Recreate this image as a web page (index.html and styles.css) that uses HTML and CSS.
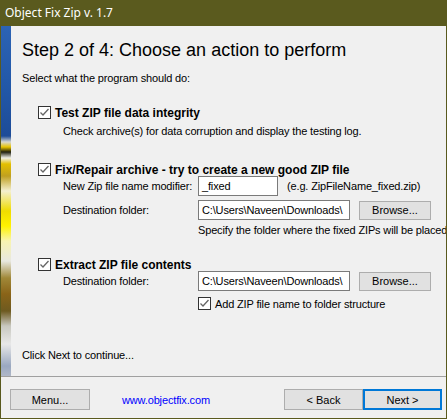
FILE: index.html
```html
<!DOCTYPE html>
<html lang="en">
  <head>
    <meta charset="UTF-8" />
    <meta name="viewport" content="width=device-width, initial-scale=1.0" />
    <title>Object Fix Zip v. 1.7</title>
    <link rel="stylesheet" href="styles.css">
  </head>
  <body>
    <div class="window">
      <div class="titlebar">Object Fix Zip v. 1.7</div>

      <div class="main">
        <div class="banner"></div>
        <div class="content">
          <h1>Step 2 of 4: Choose an action to perform</h1>
          <p class="intro">Select what the program should do:</p>

          <div class="option opt-test">
            <label class="check-row">
              <span class="box"><svg width="13" height="13" viewBox="0 0 13 13"><rect x="0.5" y="0.5" width="12" height="12" fill="#fff" stroke="#333"/><polyline points="2.5,6.5 5,9 10.5,3" fill="none" stroke="#666" stroke-width="1.3"/></svg></span>
              <span class="title">Test ZIP file data integrity</span>
            </label>
            <div class="desc">Check archive(s) for data corruption and display the testing log.</div>
          </div>

          <div class="option opt-fix">
            <label class="check-row">
              <span class="box"><svg width="13" height="13" viewBox="0 0 13 13"><rect x="0.5" y="0.5" width="12" height="12" fill="#fff" stroke="#333"/><polyline points="2.5,6.5 5,9 10.5,3" fill="none" stroke="#666" stroke-width="1.3"/></svg></span>
              <span class="title clipped">Fix/Repair archive - try to create a new good ZIP file</span>
            </label>
            <div class="field field-first">
              <span class="field-label">New Zip file name modifier:</span>
              <span class="input short">_fixed</span>
              <span class="hint">(e.g. ZipFileName_fixed.zip)</span>
            </div>
            <div class="field">
              <span class="field-label">Destination folder:</span>
              <span class="input long">C:\Users\Naveen\Downloads\</span>
              <button class="btn browse">Browse...</button>
            </div>
            <div class="note">Specify the folder where the fixed ZIPs will be placed</div>
          </div>

          <div class="option opt-extract">
            <label class="check-row">
              <span class="box"><svg width="13" height="13" viewBox="0 0 13 13"><rect x="0.5" y="0.5" width="12" height="12" fill="#fff" stroke="#333"/><polyline points="2.5,6.5 5,9 10.5,3" fill="none" stroke="#666" stroke-width="1.3"/></svg></span>
              <span class="title">Extract ZIP file contents</span>
            </label>
            <div class="field field-first">
              <span class="field-label">Destination folder:</span>
              <span class="input long">C:\Users\Naveen\Downloads\</span>
              <button class="btn browse">Browse...</button>
            </div>
            <label class="check-row sub-check">
              <span class="box"><svg width="13" height="13" viewBox="0 0 13 13"><rect x="0.5" y="0.5" width="12" height="12" fill="#fff" stroke="#333"/><polyline points="2.5,6.5 5,9 10.5,3" fill="none" stroke="#666" stroke-width="1.3"/></svg></span>
              <span class="small-label">Add ZIP file name to folder structure</span>
            </label>
          </div>

          <p class="next-hint">Click Next to continue...</p>
        </div>
      </div>

      <div class="footer">
        <button class="btn">Menu...</button>
        <a class="site" href="#">www.objectfix.com</a>
        <div class="nav">
          <button class="btn">&lt; Back</button>
          <button class="btn default">Next &gt;</button>
        </div>
      </div>
    </div>
  </body>
</html>
```

FILE: styles.css
```css
body {
  margin: 0;
  padding: 0;
  background-color: #f0f0f0;
  font-family: "Liberation Sans", Arial, sans-serif;
  font-size: 11px;
  letter-spacing: -0.15px;
  color: #000;
}
.window {
  width: 447px;
  height: 419px;
  box-sizing: border-box;
  border: 1px solid #5a5a1e;
  border-top: none;
  background-color: #f0f0f0;
  overflow: hidden;
}
.titlebar {
  height: 26px;
  margin: 0 -1px;
  padding-left: 5px;
  background-color: #5a5a1e;
  color: #fff;
  font-family: "Noto Sans", "Open Sans", sans-serif;
  font-size: 12px;
  letter-spacing: 0;
  line-height: 26px;
}
.main {
  display: flex;
  height: 350px;
}
.banner {
  width: 10px;
  flex-shrink: 0;
  background: linear-gradient(
    to bottom,
    #2c63b4 0px,
    #2258a8 60px,
    #1d4c98 110px,
    #d8d8d0 116px,
    #e8c400 121px,
    #202010 126px,
    #f0f0e8 132px,
    #e4c000 138px,
    #c0a020 150px,
    #f4f0d0 165px,
    #f0dc00 185px,
    #fff200 200px,
    #f8f4b0 215px,
    #e8e8e0 235px,
    #a08838 252px,
    #8a6418 268px,
    #6e5a20 285px,
    #c8c8c0 300px,
    #e8e8e8 318px,
    #9aa8c0 340px,
    #b0b8c8 350px
  );
}
.content {
  flex: 1;
  padding-left: 11px;
  white-space: nowrap;
  overflow: hidden;
}
h1 {
  margin: 13px 0 0;
  font-size: 18px;
  font-weight: normal;
  letter-spacing: 0;
  line-height: 22px;
}
.intro {
  margin: 11px 0 0;
  line-height: 13px;
}
.check-row {
  display: flex;
  align-items: center;
  height: 13px;
}
.box {
  width: 13px;
  height: 13px;
  margin-right: 4px;
  flex-shrink: 0;
}
.box svg {
  display: block;
}
.title {
  font-size: 12px;
  font-weight: bold;
  letter-spacing: 0;
}
.title.clipped {
  width: 297px;
  overflow: hidden;
}
.option {
  padding-left: 16px;
}
.opt-test {
  margin-top: 21px;
}
.opt-fix {
  margin-top: 25px;
}
.opt-extract {
  margin-top: 21px;
}
.desc {
  margin: 6px 0 0 25px;
  line-height: 13px;
}
.field {
  display: flex;
  align-items: center;
  height: 20px;
  margin-top: 4px;
  padding-left: 25px;
}
.field-first {
  margin-top: 0;
}
.field-label {
  width: 135px;
  flex-shrink: 0;
}
.input {
  box-sizing: border-box;
  height: 20px;
  padding: 0 3px;
  border: 1px solid #7a7a7a;
  background-color: #fff;
  line-height: 18px;
  overflow: hidden;
  flex-shrink: 0;
}
.input.short {
  width: 80px;
}
.input.long {
  width: 152px;
}
.hint {
  margin-left: 9px;
}
.btn {
  box-sizing: border-box;
  height: 21px;
  padding: 0;
  border: 1px solid #adadad;
  background-color: #e1e1e1;
  font-family: "Liberation Sans", Arial, sans-serif;
  font-size: 11px;
  color: #000;
  flex-shrink: 0;
}
.browse {
  width: 72px;
  height: 19px;
  margin-left: 9px;
}
.note {
  margin: 4px 0 0 160px;
  line-height: 13px;
}
.sub-check {
  margin: 6px 0 0 160px;
}
.next-hint {
  margin: 39px 0 0;
  line-height: 13px;
}
.footer {
  display: flex;
  align-items: flex-start;
  height: 41px;
  padding: 12px 4px 0 9px;
  box-sizing: border-box;
  border-top: 1px solid #a0a0a0;
}
.footer .btn {
  width: 80px;
}
.site {
  margin: 5px 0 0 32px;
  color: #0000ff;
  text-decoration: none;
  line-height: 13px;
}
.nav {
  display: flex;
  margin-left: auto;
}
.nav .btn {
  width: 79px;
}
.btn.default {
  border: 2px solid #0078d7;
}
```
